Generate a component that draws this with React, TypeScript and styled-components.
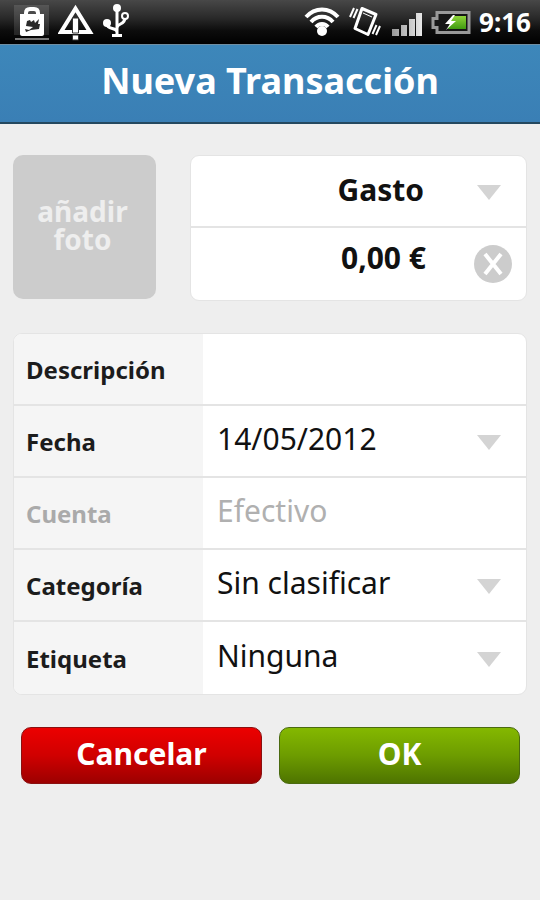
import { memo } from "react"
import type { ReactNode } from "react"
import styled, { createGlobalStyle } from "styled-components"

const GlobalStyle = createGlobalStyle`
  * {
    box-sizing: border-box;
  }

  body {
    margin: 0;
    background-color: #eeeeee;
    font-family: "Noto Sans", "Open Sans", sans-serif;
  }

  input,
  select,
  button {
    font-family: inherit;
  }
`

const StatusBar = styled.div`
  display: flex;
  justify-content: space-between;
  height: 44px;
  padding: 0 9px 0 14px;
  background: linear-gradient(#484848, #2a2a2a 40%, #0c0c0c 70%, #000000);
  color: #ffffff;
`

const StatusGroup = styled.div`
  display: flex;
  align-items: center;
  gap: 8px;
`

const Clock = styled.time`
  font-size: 26px;
  font-weight: 700;
  line-height: 44px;
`

const Header = styled.header`
  height: 80px;
  border-top: 1px solid #6f8ea3;
  border-bottom: 2px solid #24485f;
  background: linear-gradient(#3d87ba, #3a7fb5);
`

const Title = styled.h1`
  margin: 0;
  font-size: 36px;
  font-weight: 700;
  line-height: 72px;
  text-align: center;
  color: #ffffff;
`

const Form = styled.form`
  display: flex;
  flex-direction: column;
  gap: 32px;
  padding: 31px 13px;
`

const Top = styled.div`
  display: flex;
  gap: 34px;
`

const PhotoButton = styled.button`
  flex: none;
  width: 143px;
  height: 144px;
  padding: 0 24px 4px 20px;
  border: 0;
  border-radius: 10px;
  background-color: #cccccc;
  color: #eeeeee;
  font-size: 28px;
  font-weight: 700;
  line-height: 28px;
`

const Card = styled.div`
  flex: 1;
  min-width: 0;
  border: 1px solid #e4e4e4;
  border-radius: 9px;
  background-color: #ffffff;
  overflow: hidden;
`

const Row = styled.div`
  display: flex;
  height: 72px;

  &:not(:last-child) {
    border-bottom: 2px solid #e4e4e4;
  }
`

const Label = styled.label<{ $disabled?: boolean }>`
  flex: none;
  display: flex;
  align-items: center;
  width: 189px;
  padding-left: 12px;
  background-color: #f5f5f5;
  color: ${(p) => (p.$disabled ? "#aaaaaa" : "#1c1c1c")};
  font-size: 24px;
  font-weight: 700;
`

const Field = styled.div`
  position: relative;
  flex: 1;
  display: flex;
  min-width: 0;
`

const control = `
  appearance: none;
  width: 100%;
  margin: 0;
  border: 0;
  border-radius: 0;
  outline: 0;
  background: transparent;
  color: #111111;
  font-size: 30px;
`

const TextInput = styled.input`
  ${control}
  padding: 0 64px 6px 14px;

  &:disabled {
    color: #b0b0b0;
  }
`

const Select = styled.select`
  ${control}
  padding: 0 64px 6px 14px;
`

const KindSelect = styled.select`
  ${control}
  padding: 0 102px 4px 14px;
  font-weight: 700;
  text-align-last: right;
`

const AmountInput = styled.input`
  ${control}
  padding: 0 100px 14px 14px;
  font-weight: 700;
  text-align: right;
`

const ArrowIcon = styled.svg`
  position: absolute;
  right: 24px;
  top: 50%;
  margin-top: -6px;
  pointer-events: none;
`

const ClearButton = styled.button`
  position: absolute;
  right: 14px;
  top: 50%;
  width: 38px;
  height: 38px;
  margin-top: -19px;
  padding: 0;
  border: 0;
  border-radius: 50%;
  background-color: #cccccc;

  svg {
    display: block;
  }
`

const Actions = styled.div`
  display: grid;
  grid-template-columns: 1fr 1fr;
  gap: 17px;
  padding: 0 7px 0 8px;
`

const ActionButton = styled.button<{ $kind: "cancel" | "ok" }>`
  height: 57px;
  padding: 0 0 4px;
  border: 1px solid ${(p) => (p.$kind === "ok" ? "#4a6a10" : "#8a1010")};
  border-radius: 10px;
  background: ${(p) =>
    p.$kind === "ok"
      ? "linear-gradient(#84b800, #6d9c00 50%, #4e7400)"
      : "linear-gradient(#ec0000, #d00000 50%, #9c0000)"};
  color: #ffffff;
  font-size: 30px;
  font-weight: 700;
  line-height: 40px;
`

const BagIcon = () => (
  <svg width="36" height="44" viewBox="0 0 36 44" aria-hidden="true">
    <path d="M0 5h35v30H0z" fill="#fff" opacity="0.12" />
    <path d="M1 38h34v2H1z" fill="#777" />
    <path
      d="M12 15v-2c0-3 2-4 4-4h4c2 0 4 1 4 4v2"
      fill="none"
      stroke="#fff"
      strokeWidth="4"
    />
    <path d="M6 14h24v20c0 1-1 2-2 2H8c-1 0-2-1-2-2z" fill="#fff" />
    <path
      d="M13 21l3-1 1 2 3-2 1 3 4-4-1 5h2l-1 5-8 1-5 2-1-3 4 1 4-3-7-1z"
      fill="#2a2a2a"
    />
  </svg>
)

const WarningIcon = () => (
  <svg width="36" height="44" viewBox="0 0 36 44" aria-hidden="true">
    <path d="M17.500 8.500L32 32H3z" fill="none" stroke="#fff" strokeWidth="4" />
    <path d="M14.500 18h6v15h-6zM14.500 35h6v5h-6z" fill="#fff" stroke="#333" />
  </svg>
)

const UsbIcon = () => (
  <svg width="30" height="44" viewBox="0 0 30 44" aria-hidden="true">
    <g fill="none" stroke="#fff" strokeWidth="3">
      <path d="M15 8v27M5 24c0 6 10 3 10 8M23 18c0 7-8 5-8 10" />
      <circle cx="23" cy="16" r="3" strokeWidth="2" />
    </g>
    <circle cx="15" cy="8" r="4" fill="#fff" />
    <circle cx="5" cy="23" r="4" fill="#fff" />
    <path d="M10 34h10v3H10z" fill="#fff" />
  </svg>
)

const WifiIcon = () => (
  <svg width="38" height="44" viewBox="0 0 38 44" aria-hidden="true">
    <g fill="none" stroke="#fff" strokeWidth="4">
      <path d="M3 17c9-10 23-10 32 0M8 22c6-7 16-7 22 0M13 27c3-4 9-4 12 0" />
    </g>
    <circle cx="19" cy="31" r="5" fill="#fff" />
  </svg>
)

const VibrateIcon = () => (
  <svg width="32" height="44" viewBox="0 0 32 44" aria-hidden="true">
    <g fill="none" stroke="#fff">
      <path
        d="M13 8.500l14 6-8 20-13-6z"
        strokeWidth="3"
        strokeLinejoin="round"
      />
      <path d="M14 13l9 4" strokeWidth="1" />
      <path
        d="M5 8l-4 9M8.500 9l-4 9M27.500 25l-4 9M31 26l-4 9"
        strokeWidth="2"
      />
    </g>
  </svg>
)

const SignalIcon = () => (
  <svg width="34" height="44" viewBox="0 0 34 44" aria-hidden="true">
    <defs>
      <linearGradient id="bars">
        <stop offset="0" stopColor="#999" />
        <stop offset="1" stopColor="#e8e8e8" />
      </linearGradient>
    </defs>
    <path
      d="M3 29h7v7H3zM12 25h6v11h-6zM20 19h6v17h-6zM27 13h6v23h-6z"
      fill="url(#bars)"
    />
  </svg>
)

const BatteryIcon = () => (
  <svg width="40" height="44" viewBox="0 0 40 44" aria-hidden="true">
    <defs>
      <linearGradient id="charge" x2="0" y2="1">
        <stop offset="0" stopColor="#8fd43a" />
        <stop offset="1" stopColor="#3f9a10" />
      </linearGradient>
    </defs>
    <path
      d="M6 12.500h32v20H6v-5H2v-9h4z"
      fill="#161616"
      stroke="#999"
      strokeWidth="3"
    />
    <path d="M21 16h14v13H17z" fill="url(#charge)" />
    <path d="M22 15l-8 9h5l-4 6 10-9h-5l4-6z" fill="#fff" />
  </svg>
)

const Arrow = () => (
  <ArrowIcon width="26" height="15" viewBox="0 0 26 15" aria-hidden="true">
    <path d="M1 0h24L13 15z" fill="#d4d4d4" />
  </ArrowIcon>
)

type FormRowProps = {
  id: string
  label: string
  disabled?: boolean
  children: ReactNode
}

const _FormRow = ({ id, label, disabled, children }: FormRowProps) => (
  <Row>
    <Label htmlFor={id} $disabled={disabled}>
      {label}
    </Label>
    <Field>{children}</Field>
  </Row>
)
const FormRow = memo(_FormRow)

const App = () => {
  return (
    <>
      <GlobalStyle />
      <StatusBar>
        <StatusGroup>
          <BagIcon />
          <WarningIcon />
          <UsbIcon />
        </StatusGroup>
        <StatusGroup>
          <WifiIcon />
          <VibrateIcon />
          <SignalIcon />
          <BatteryIcon />
          <Clock>9:16</Clock>
        </StatusGroup>
      </StatusBar>
      <Header>
        <Title>Nueva Transacción</Title>
      </Header>
      <Form onSubmit={(e) => e.preventDefault()}>
        <Top>
          <PhotoButton type="button">añadir foto</PhotoButton>
          <Card>
            <Row>
              <Field>
                <KindSelect aria-label="Tipo">
                  <option>Gasto</option>
                </KindSelect>
                <Arrow />
              </Field>
            </Row>
            <Row>
              <Field>
                <AmountInput aria-label="Importe" defaultValue="0,00 €" />
                <ClearButton type="button" aria-label="Borrar">
                  <svg width="38" height="38" viewBox="0 0 38 38">
                    <path
                      d="M11 9l16 20M27 9L11 29"
                      stroke="#fff"
                      strokeWidth="4"
                    />
                  </svg>
                </ClearButton>
              </Field>
            </Row>
          </Card>
        </Top>
        <Card>
          <FormRow id="descripcion" label="Descripción">
            <TextInput id="descripcion" />
          </FormRow>
          <FormRow id="fecha" label="Fecha">
            <TextInput id="fecha" defaultValue="14/05/2012" />
            <Arrow />
          </FormRow>
          <FormRow id="cuenta" label="Cuenta" disabled>
            <TextInput id="cuenta" defaultValue="Efectivo" disabled />
          </FormRow>
          <FormRow id="categoria" label="Categoría">
            <Select id="categoria">
              <option>Sin clasificar</option>
            </Select>
            <Arrow />
          </FormRow>
          <FormRow id="etiqueta" label="Etiqueta">
            <Select id="etiqueta">
              <option>Ninguna</option>
            </Select>
            <Arrow />
          </FormRow>
        </Card>
        <Actions>
          <ActionButton type="button" $kind="cancel">
            Cancelar
          </ActionButton>
          <ActionButton type="submit" $kind="ok">
            OK
          </ActionButton>
        </Actions>
      </Form>
    </>
  )
}

export default App
